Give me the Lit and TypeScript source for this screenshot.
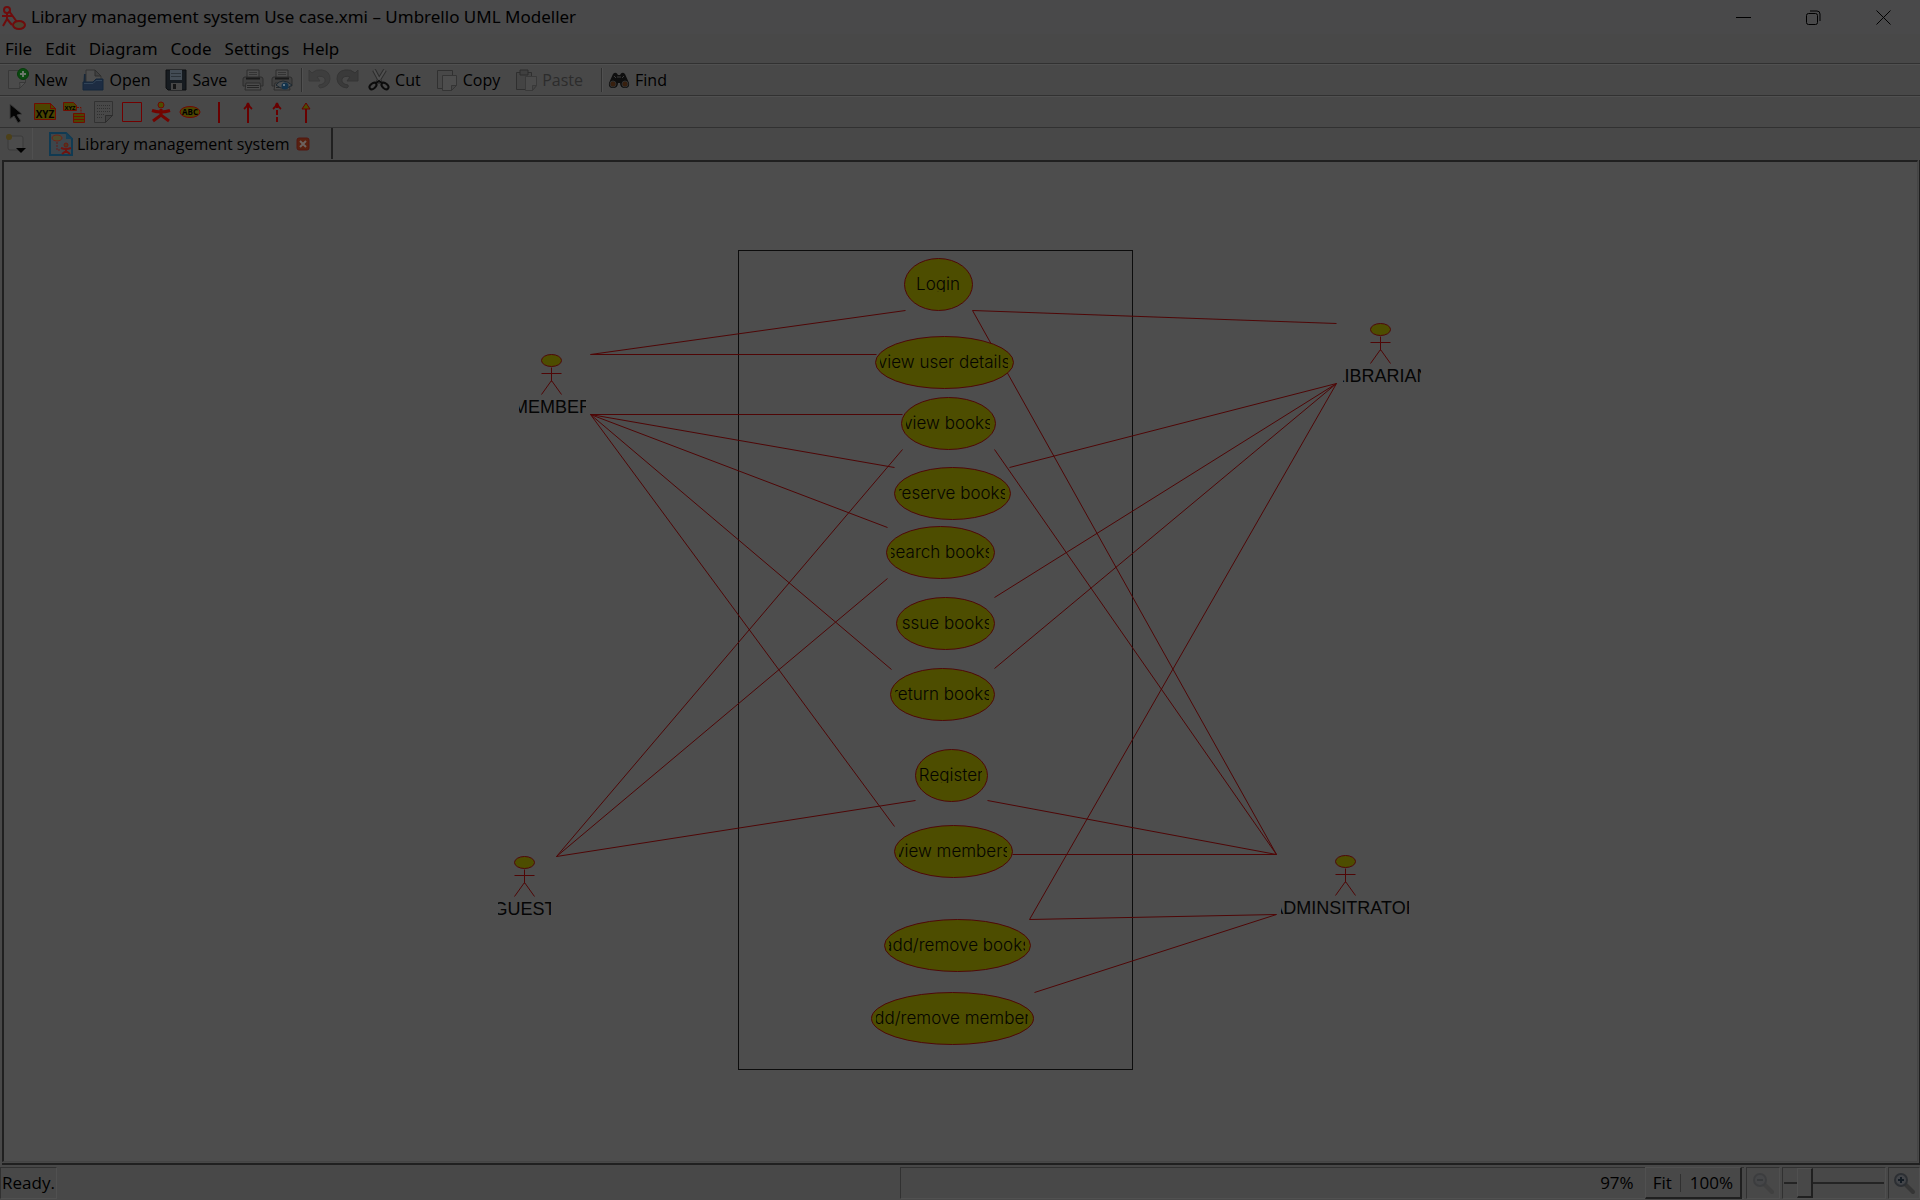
import { LitElement, html, svg, css } from "lit";
import { customElement, property, state } from "lit/decorators.js";

type UseCase = { label: string; cx: number; cy: number; rx: number };
type Actor = { label: string; cx: number; top: number; left: number; right: number };
type Link = [number, number, number, number];

const USE_CASES: UseCase[] = [
  { label: "Login", cx: 938, cy: 284, rx: 34 },
  { label: "view user details", cx: 944, cy: 362, rx: 69 },
  { label: "view books", cx: 948, cy: 423, rx: 47 },
  { label: "reserve books", cx: 952, cy: 493, rx: 58 },
  { label: "search books", cx: 940, cy: 552, rx: 54 },
  { label: "issue books", cx: 945, cy: 623, rx: 49 },
  { label: "return books", cx: 942, cy: 694, rx: 52 },
  { label: "Register", cx: 951, cy: 775, rx: 36 },
  { label: "view members", cx: 953, cy: 851, rx: 59 },
  { label: "add/remove books", cx: 957, cy: 945, rx: 73 },
  { label: "add/remove members", cx: 952, cy: 1018, rx: 81 },
];

const ACTORS: Actor[] = [
  { label: "MEMBER", cx: 551, top: 354, left: 519, right: 586 },
  { label: "LIBRARIAN", cx: 1380, top: 323, left: 1343, right: 1421 },
  { label: "GUEST", cx: 524, top: 856, left: 498, right: 551 },
  { label: "ADMINSITRATOR", cx: 1345, top: 855, left: 1281, right: 1409 },
];

const LINKS: Link[] = [
  [590, 354, 905, 310],
  [590, 354, 876, 354],
  [590, 414, 902, 414],
  [590, 414, 894, 467],
  [590, 414, 887, 527],
  [590, 414, 891, 669],
  [590, 414, 894, 826],
  [972, 310, 1336, 323],
  [972, 310, 1276, 854],
  [1336, 383, 1009, 467],
  [1336, 383, 994, 597],
  [1336, 383, 994, 668],
  [1336, 383, 1029, 919],
  [902, 449, 556, 856],
  [887, 578, 556, 856],
  [915, 800, 556, 856],
  [987, 800, 1276, 854],
  [994, 449, 1276, 854],
  [1012, 854, 1276, 854],
  [1029, 919, 1276, 914],
  [1034, 992, 1276, 914],
];

const page = svg`<path d="M1.500 1.500h17v12l-6 6h-11z" fill="#4b4b4b" stroke="#383838"/><path d="M18.500 13.500l-6 6q1-3 0-6z" fill="#505050" stroke="#383838"/>`;
const printer = svg`
  <path d="M5 1h12v8H5z" fill="#4c4c4c" stroke="#2c2c2c"/>
  <path d="M7 3.500h8M7 5.500h8" stroke="#343434"/>
  <path d="M1 10q0-2 2-2h16q2 0 2 2v7H1z" fill="#404040" stroke="#2c2c2c"/>
  <path d="M4 9.500h14" stroke="#191919" stroke-width="2"/>
  <path d="M4 14h14l1 7H3z" fill="#4b4b4b" stroke="#2c2c2c"/>
  <path d="M5 16.500h12M5 18.500h12" stroke="#262626"/>`;
const magnifier = svg`
  <path d="M13 13l7 7" stroke="#353535" stroke-width="4" stroke-linecap="round"/>
  <circle cx="8" cy="8" r="6" fill="#434549" stroke="#2c2f33" stroke-width="2"/>`;

const ICONS: Record<string, unknown> = {
  app: svg`<g fill="none" stroke="#6e0c0c" stroke-width="2"><circle cx="5" cy="4" r="3"/><path d="M5 7v7M0 10h10M5 13l-4 7M5 13l5 6M7 5l8 11"/><ellipse cx="17" cy="19" rx="6" ry="4" fill="#4c4432"/></g>`,
  new: svg`${page}<circle cx="16" cy="5" r="5.500" fill="#0a4a10" stroke="#083b0c"/><path d="M16 2v6M13 5h6" stroke="#6c786c" stroke-width="2"/>`,
  open: svg`<path d="M2 5h6l2 3v13H1z" fill="#18283a"/><path d="M4 1h9l6 6v9H4z" fill="#4d4d4d" stroke="#333"/><path d="M13 1v6h6z" fill="#414141" stroke="#2e2e2e"/><path d="M14 10h7v11H1V13h10z" fill="#1d2c42" stroke="#15263a"/><path d="M2 14.500h9l3-3h6" fill="none" stroke="#314458"/>`,
  save: svg`<path d="M1 1h20v20H3l-2-2z" fill="#161b20" stroke="#0d0f11"/><path d="M5 1h12v10H5z" fill="#434c55"/><path d="M6 4.500h10M6 7.500h10" stroke="#2b3238"/><path d="M6 14h11v7H6z" fill="#464646"/><path d="M8 15h3v5H8z" fill="#151515"/>`,
  print: printer,
  preview: svg`${printer}<path d="M5 16q6-8 16 0-8 7-16 0z" fill="#4b4e50" stroke="#1c2831"/><circle cx="14" cy="17" r="3.500" fill="#12334c"/><circle cx="13" cy="16" r="1" fill="#7b8b95"/>`,
  undo: svg`<path d="M1 1l3 3q4-4 10-3 8 1 8 9-1 8-10 9-2-1-1-3 7-1 6-6-2-4-8-2l3 4H1z" fill="#3e3e3e" stroke="#393939"/>`,
  redo: svg`<path d="M21 1l-3 3q-4-4-10-3-8 1-8 9 1 8 10 9 2-1 1-3-7-1-6-6 2-4 8-2l-3 4h11z" fill="#3a3a3a" stroke="#343434"/>`,
  cut: svg`<path d="M6 1l7 13M17 1L9 14" stroke="#2c2c2c" stroke-width="4"/><path d="M6 1l7 13M17 1L9 14" stroke="#505050" stroke-width="2"/><g fill="none" stroke="#0c0c0c" stroke-width="2"><ellipse cx="5" cy="17" rx="4" ry="2.500" transform="rotate(-40 5 17)"/><ellipse cx="17" cy="17" rx="4" ry="2.500" transform="rotate(40 17 17)"/><path d="M8 14l3-2 3 2"/></g>`,
  copy: svg`<path d="M1.500 1.500h15v18h-15z" fill="#484848" stroke="#303030"/><path d="M6.500 6.500h14v10l-5 5h-9z" fill="#4d4d4d" stroke="#343434"/><path d="M20.500 16.500l-5 5v-5z" fill="#444" stroke="#343434"/>`,
  paste: svg`<path d="M1.500 3.500h15v17h-15z" fill="#444" stroke="#2f2f2f"/><path d="M5 1h8v5H5z" fill="#404040" stroke="#2c2c2c"/><path d="M10.500 7.500h11v9l-4 5h-7z" fill="#4b4b4b" stroke="#393939"/><path d="M21.500 16.500l-4 5v-5z" fill="#444" stroke="#393939"/>`,
  find: svg`<g fill="#0e0e0e"><path d="M5 5q3-3 5 1h2q2-4 5-1l4 9q1 5-4 5t-5-5h-2q0 5-5 5t-4-5z"/></g><path d="M9 8h4M6 7l2 2M16 7l-2 2" stroke="#3c3c3c"/><circle cx="5" cy="15" r="3" fill="#38200f" stroke="#303030"/><circle cx="17" cy="15" r="3" fill="#38200f" stroke="#303030"/>`,
  pointer: svg`<path d="M5 3v15l4-3 4 7 3-2-4-6 5-1z" fill="#050505" stroke="#3b3b3b"/>`,
  xyz: svg`<path d="M.500 2.500h16l5 5v11H.500z" fill="#4c4500" stroke="#720c00"/><path d="M16.500 2.500v5h5" fill="none" stroke="#720c00"/><text x="11" y="17" text-anchor="middle" fill="#000" font-family="Open Sans" font-weight="700" font-size="10">XYZ</text>`,
  relation: svg`<path d="M.500 1.500h10l3 3v5H.500z" fill="#4c4500" stroke="#720c00"/><text x="7" y="9" text-anchor="middle" fill="#000" font-family="Open Sans" font-weight="700" font-size="6">XYZ</text><path d="M14 6.500h4v6" fill="none" stroke="#720c00" stroke-dasharray="2 1"/><path d="M10.500 12.500h11v9h-11zM10.500 15.500h11M10.500 18.500h11" fill="#4c4400" stroke="#720c00"/>`,
  note: svg`<path d="M2.500.500h18v14l-7 7h-11z" fill="#484848" stroke="#323232"/><path d="M5 4.500h13M5 7.500h13M5 10.500h13M5 13.500h8M5 16.500h6" stroke="#303030" stroke-dasharray="1 1"/><path d="M20.500 14.500l-7 7v-7z" fill="#404040" stroke="#2c2c2c"/>`,
  box: svg`<path d="M1.500 1.500h19v19h-19z" fill="none" stroke="#720000"/>`,
  actor: svg`<circle cx="11" cy="4" r="3" fill="#4d4d00" stroke="#720800"/><path d="M2 9.500q9 3 18 0" fill="none" stroke="#720400" stroke-width="3"/><path d="M11 8v7M3 20l8-6 8 6" fill="none" stroke="#720400" stroke-width="3"/>`,
  usecase: svg`<ellipse cx="11" cy="11" rx="10" ry="5.500" fill="#4c4600" stroke="#720800"/><text x="11" y="14" text-anchor="middle" fill="#000" font-family="Open Sans" font-weight="700" font-size="8">ABC</text>`,
  line: svg`<path d="M11 1v21" stroke="#680000" stroke-width="2"/>`,
  arrow: svg`<path d="M11 2v20M7 8q3-2 4-6 1 4 4 6" fill="none" stroke="#680000" stroke-width="2"/>`,
  dashed: svg`<path d="M11 2v20" stroke="#680000" stroke-width="2" stroke-dasharray="5 2"/><path d="M7 8q3-2 4-6 1 4 4 6" fill="none" stroke="#680000" stroke-width="2"/>`,
  general: svg`<path d="M11 8v14" stroke="#680000" stroke-width="2"/><path d="M11 2l4 6H7z" fill="#4d4d00" stroke="#680000"/>`,
  tabs: svg`<path d="M3 5q0-2 2-2h11q2 0 2 2v10q0 2-2 2H5q-2 0-2-2z" fill="#4b4b4b" stroke="#3a3a3a"/><circle cx="4" cy="4" r="3" fill="#4c4018"/><path d="M11 15h10l-5 5z" fill="#000"/>`,
  diagram: svg`<path d="M1 1h16l6 6v16H1z" fill="#3d464c" stroke="#103a52" stroke-width="2"/><path d="M17 1v6h6z" fill="#163f56"/><ellipse cx="8" cy="6" rx="5" ry="3" fill="#4c4a2c" stroke="#6e2418"/><path d="M8 10v8h4" fill="none" stroke="#641818" stroke-dasharray="2 1"/><circle cx="17" cy="13" r="2" fill="#4c3820" stroke="#6e1a10"/><path d="M12 16q5 2 10 0M17 16v3M13 22l4-3 4 3" fill="none" stroke="#6e1410" stroke-width="2"/>`,
  close: svg`<rect x="1" y="1" width="12" height="12" rx="2" fill="#58200f" stroke="#521610"/><path d="M4 4l6 6M10 4l-6 6" stroke="#6c625e" stroke-width="2"/>`,
  zoomout: svg`<g opacity=".4">${magnifier}<path d="M5 8h6" stroke="#202428" stroke-width="2"/></g>`,
  zoomin: svg`${magnifier}<path d="M5 8h6M8 5v6" stroke="#141c24" stroke-width="2"/>`,
  min: svg`<path d="M0 7.500h15" stroke="#000"/>`,
  restore: svg`<path d="M4 1h7q3 0 3 3v7" fill="none" stroke="#000"/><rect x=".500" y="3.500" width="11" height="11" rx="2" fill="none" stroke="#000"/>`,
  shut: svg`<path d="M.500.500l14 14M14.500.500l-14 14" stroke="#000"/>`,
};

@customElement("uml-icon")
export class UmlIcon extends LitElement {
  @property() name = "";
  @property({ type: Number }) size = 22;

  static styles = css`
    :host { display: block; flex: none; }
    .glyph { display: block; overflow: visible; }
  `;

  render() {
    return html`<svg class="glyph" width=${this.size} height=${this.size} viewBox="0 0 ${this.size} ${this.size}" fill="none" aria-hidden="true">${ICONS[this.name]}</svg>`;
  }
}

@customElement("use-case-diagram")
export class UseCaseDiagram extends LitElement {
  static styles = css`
    :host { display: block; flex: 1; min-height: 0; overflow: hidden; }
    .scene { display: block; width: 100%; height: 100%; }
    .system { fill: none; stroke: #0c0c0c; }
    .link, .limb { stroke: #4f0606; fill: none; }
    .oval { fill: #4d4d00; stroke: #4f0808; }
    .case-name { font: 300 17px Inter, sans-serif; fill: #050500; text-anchor: middle; }
    .actor-name { font: 18px "Liberation Sans", sans-serif; fill: #050505; text-anchor: middle; }
  `;

  private useCase(item: UseCase) {
    const width = item.rx * 2 - 10;
    return svg`
      <ellipse class="oval" cx=${item.cx + 0.5} cy=${item.cy + 0.5} rx=${item.rx} ry="26"></ellipse>
      <svg x=${item.cx - width / 2} y=${item.cy - 12} width=${width} height="20" overflow="hidden">
        <text class="case-name" x=${width / 2} y="18">${item.label}</text>
      </svg>`;
  }

  private actor(item: Actor) {
    const { cx, top, left, right } = item;
    return svg`
      <path class="limb" transform="translate(${cx + 0.5} ${top + 0.5})" d="M0 13v14M-10 19h20M-10 40L0 26L10 40"></path>
      <ellipse class="oval" cx=${cx + 0.5} cy=${top + 6.5} rx="10" ry="6"></ellipse>
      <svg x=${left} y=${top + 42} width=${right - left} height="20" overflow="hidden">
        <text class="actor-name" x=${(right - left) / 2} y="17">${item.label}</text>
      </svg>`;
  }

  render() {
    return html`
      <svg class="scene" role="img" aria-label="Library management system use case diagram">
        <g transform="translate(-4 -162)">
          <rect class="system" x="738.5" y="250.5" width="394" height="819"></rect>
          ${LINKS.map(([a, b, c, d]) => svg`<line class="link" x1=${a + 0.5} y1=${b + 0.5} x2=${c + 0.5} y2=${d + 0.5}></line>`)}
          ${USE_CASES.map((item) => this.useCase(item))}
          ${ACTORS.map((item) => this.actor(item))}
        </g>
      </svg>`;
  }
}

@customElement("app-root")
export class AppRoot extends LitElement {
  @state() private zoom = 97;

  static styles = css`
    :host {
      display: flex;
      flex-direction: column;
      height: 100vh;
      overflow: hidden;
      background: #484848;
      color: #000;
      font: 16px/24px "Open Sans", sans-serif;
    }
    button {
      display: flex;
      align-items: center;
      border: 0;
      margin: 0;
      padding: 0;
      background: none;
      color: inherit;
      font: inherit;
    }
    .titlebar { display: flex; align-items: center; height: 34px; padding: 0 2px; background: #49494a; }
    .title { flex: 1; margin: 0 0 0 6px; font: 17px/24px "Noto Sans", sans-serif; }
    .window-button { width: 70px; height: 34px; justify-content: center; }
    .menubar { display: flex; align-items: center; height: 29px; gap: 13px; padding: 0 5px; font: 17px/24px "Noto Sans", sans-serif; }
    .toolbar { display: flex; align-items: center; height: 31px; border-bottom: 1px solid #313131; box-shadow: inset 0 1px #505050; }
    .actions { padding-left: 3px; border-top: 1px solid #313131; }
    .shapes { padding-left: 1px; }
    .group { display: flex; }
    .edit { padding: 0 2px; }
    .tool { height: 30px; padding: 0 3px 0 4px; gap: 5px; }
    .labelled { padding-right: 11px; }
    .tool:disabled { color: #2c2c2c; }
    .separator { width: 1px; height: 24px; margin: 0 2px 0 5px; background: #303030; box-shadow: 1px 0 #505050; }
    .tabbar { display: flex; align-items: stretch; height: 32px; }
    .tab-menu { width: 32px; padding-left: 5px; }
    .tab { display: flex; align-items: center; gap: 4px; width: 282px; padding-left: 16px; border-left: 1px solid #505050; border-right: 2px solid #202020; margin-bottom: 1px; }
    .tab-close { margin-left: 2px; }
    .frame { display: flex; flex: 1; min-height: 0; padding: 0 1px 1px 0; border-right: 1px solid #202020; border-bottom: 2px solid #202020; margin-left: 2px; }
    .canvas { display: flex; flex: 1; min-width: 0; background: #4d4d4d; border: 2px solid #202020; border-right: 1px solid #444; border-bottom: 1px solid #444; }
    .statusbar { display: flex; align-items: flex-start; box-sizing: border-box; height: 35px; padding-top: 2px; gap: 2px; font: 17px/24px "Open Sans", sans-serif; }
    .cell { display: flex; align-items: center; box-sizing: border-box; height: 32px; border: 1px solid #313131; border-right-color: #505050; border-bottom-color: #505050; }
    .ready { padding: 0 1px; }
    .spacer { flex: 1; }
    .zoom-info { width: 844px; justify-content: flex-end; gap: 11px; padding-right: 2px; border-right: 0; }
    .zoom-buttons { display: flex; align-items: center; height: 29px; padding-left: 7px; border: 1px solid #505050; border-right: 2px solid #202020; border-bottom: 2px solid #202020; }
    .fit { padding-right: 8px; }
    .full { padding: 0 7px 0 9px; border-left: 1px solid #303030; height: 18px; }
    .icon-cell { width: 34px; justify-content: center; }
    .last { width: 32px; }
    .slider-cell { width: 104px; padding: 0 1px; }
    .slider { appearance: none; width: 100%; height: 30px; margin: 0; background: linear-gradient(#242424, #242424) center / 100% 2px no-repeat; }
    .slider::-webkit-slider-thumb { appearance: none; box-sizing: border-box; width: 16px; height: 30px; background: #484848; border: 1px solid #505050; border-right: 2px solid #202020; border-bottom: 2px solid #202020; }
  `;

  private tool(icon: string, title: string, label = "", disabled = false) {
    return html`<button class="tool ${label ? "labelled" : ""}" aria-label=${title} ?disabled=${disabled}>
      <uml-icon name=${icon}></uml-icon>${label}
    </button>`;
  }

  render() {
    return html`
      <header class="titlebar">
        <uml-icon name="app" size="23"></uml-icon>
        <h1 class="title">Library management system Use case.xmi – Umbrello UML Modeller</h1>
        <button class="window-button" aria-label="Minimize"><uml-icon name="min" size="15"></uml-icon></button>
        <button class="window-button" aria-label="Restore"><uml-icon name="restore" size="15"></uml-icon></button>
        <button class="window-button" aria-label="Close"><uml-icon name="shut" size="15"></uml-icon></button>
      </header>
      <nav class="menubar" aria-label="Main menu">
        ${["File", "Edit", "Diagram", "Code", "Settings", "Help"].map((name) => html`<button>${name}</button>`)}
      </nav>
      <div class="toolbar actions" role="toolbar" aria-label="Main">
        ${this.tool("new", "New", "New")} ${this.tool("open", "Open", "Open")} ${this.tool("save", "Save", "Save")}
        ${this.tool("print", "Print")} ${this.tool("preview", "Print preview")}
        <span class="separator"></span>
        ${this.tool("undo", "Undo", "", true)} ${this.tool("redo", "Redo", "", true)}
        <div class="group edit">
          ${this.tool("cut", "Cut", "Cut")} ${this.tool("copy", "Copy", "Copy")} ${this.tool("paste", "Paste", "Paste", true)}
        </div>
        <span class="separator"></span>
        ${this.tool("find", "Find", "Find")}
      </div>
      <div class="toolbar shapes" role="toolbar" aria-label="Diagram">
        ${this.tool("pointer", "Select")} ${this.tool("xyz", "Label")} ${this.tool("relation", "Anchor")}
        ${this.tool("note", "Note")} ${this.tool("box", "Box")} ${this.tool("actor", "Actor")}
        ${this.tool("usecase", "Use case")} ${this.tool("line", "Association")}
        ${this.tool("arrow", "Directional association")} ${this.tool("dashed", "Dependency")}
        ${this.tool("general", "Generalization")}
      </div>
      <div class="tabbar">
        <button class="tab-menu" aria-label="Open tabs"><uml-icon name="tabs"></uml-icon></button>
        <div class="tab">
          <uml-icon name="diagram" size="24"></uml-icon>
          <span>Library management system</span>
          <button class="tab-close" aria-label="Close tab"><uml-icon name="close" size="14"></uml-icon></button>
        </div>
      </div>
      <main class="frame"><div class="canvas"><use-case-diagram></use-case-diagram></div></main>
      <footer class="statusbar">
        <div class="cell ready">Ready.</div>
        <div class="spacer"></div>
        <div class="cell zoom-info">
          <span>${this.zoom}%</span>
          <div class="zoom-buttons">
            <button class="fit">Fit</button>
            <button class="full">100%</button>
          </div>
        </div>
        <div class="cell icon-cell"><button aria-label="Zoom out" disabled><uml-icon name="zoomout"></uml-icon></button></div>
        <div class="cell slider-cell">
          <input class="slider" type="range" min="20" max="500" .value=${String(this.zoom)} aria-label="Zoom"
            @input=${(e: Event) => (this.zoom = Number((e.target as HTMLInputElement).value))} />
        </div>
        <div class="cell icon-cell last"><button aria-label="Zoom in"><uml-icon name="zoomin"></uml-icon></button></div>
      </footer>
    `;
  }
}
